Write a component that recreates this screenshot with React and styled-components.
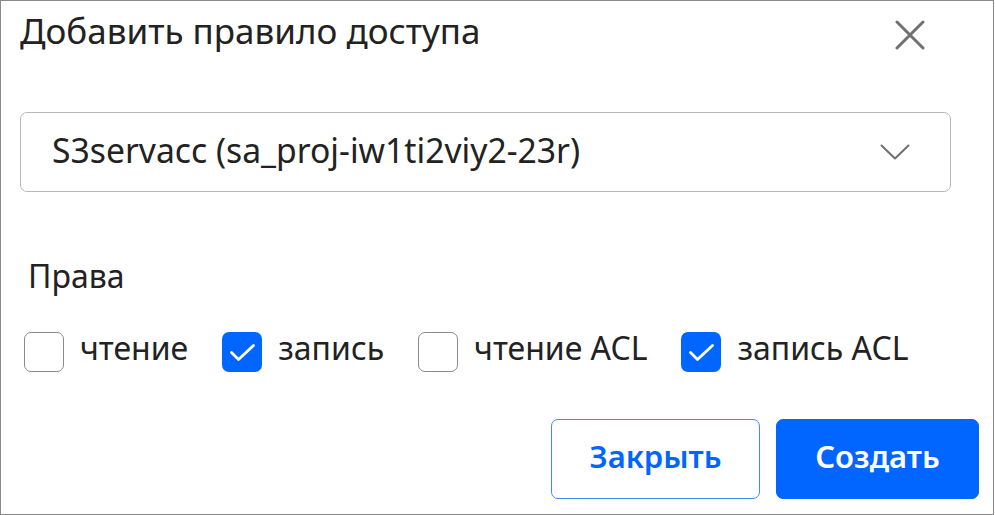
import styled, { createGlobalStyle } from "styled-components";

const GlobalStyle = createGlobalStyle`
  html, body {
    margin: 0;
    padding: 0;
    background: #ffffff;
  }
  body {
    font-family: "Noto Sans", "Open Sans", sans-serif;
    color: #222222;
  }
`;

const Dialog = styled.div`
  box-sizing: border-box;
  width: 994px;
  height: 515px;
  border: 1px solid #8a8a8a;
  background: #ffffff;
  padding: 0 14px 0 19px;
  display: flex;
  flex-direction: column;
`;

const Header = styled.div`
  display: flex;
  align-items: flex-start;
  justify-content: space-between;
  padding-top: 10px;
`;

const Title = styled.h2`
  margin: 0;
  font-size: 35px;
  font-weight: 400;
  line-height: 40px;
  color: #222222;
`;

const CloseButton = styled.button`
  border: 0;
  background: transparent;
  padding: 0;
  width: 40px;
  height: 40px;
  margin: 4px 49px 0 0;
  display: flex;
  align-items: center;
  justify-content: center;
  cursor: pointer;
`;

const Select = styled.div`
  box-sizing: border-box;
  margin-top: 57px;
  width: 931px;
  height: 80px;
  border: 1px solid #b8b8b8;
  border-radius: 7px;
  display: flex;
  align-items: center;
  justify-content: space-between;
  padding: 0 40px 0 31px;
  font-size: 33.7px;
  color: #222222;
`;

const SelectValue = styled.span`
  line-height: 40px;
  padding-bottom: 5px;
`;

const SectionLabel = styled.div`
  margin: 64px 0 0 8px;
  font-size: 32px;
  line-height: 40px;
  color: #222222;
`;

const OptionRow = styled.div`
  display: flex;
  align-items: center;
  margin: 36px 0 0 4px;
  gap: 34px;
`;

const Option = styled.label`
  display: flex;
  align-items: center;
  gap: 16px;
`;

const OptionText = styled.span`
  font-size: 32px;
  line-height: 32px;
  padding-bottom: 8px;
  color: #222222;
`;

const Box = styled.span`
  box-sizing: border-box;
  width: 40px;
  height: 40px;
  border-radius: 7px;
  display: flex;
  align-items: center;
  justify-content: center;
  border: ${(p) => (p.$checked ? "none" : "1px solid #8a8a8a")};
  background: ${(p) => (p.$checked ? "#0066ff" : "#ffffff")};
`;

const Footer = styled.div`
  display: flex;
  justify-content: flex-end;
  gap: 16px;
  margin-top: 47px;
`;

const Button = styled.button`
  box-sizing: border-box;
  height: 80px;
  width: ${(p) => p.$width}px;
  padding: 0 0 6px;
  border-radius: 7px;
  font-family: "Noto Sans", "Open Sans", sans-serif;
  font-size: 31px;
  font-weight: 600;
  cursor: pointer;
  border: 1px solid ${(p) => (p.$primary ? "#0066ff" : "#3d8bff")};
  background: ${(p) => (p.$primary ? "#0066ff" : "#ffffff")};
  color: ${(p) => (p.$primary ? "#ffffff" : "#0066ff")};
`;

const options = [
  { label: "чтение", checked: false },
  { label: "запись", checked: true },
  { label: "чтение ACL", checked: false },
  { label: "запись ACL", checked: true },
];

function Check() {
  return (
    <svg width="40" height="40" viewBox="0 0 40 40" fill="none">
      <path
        d="M9.5 20.5L16.5 27.5L31.5 13.5"
        stroke="#ffffff"
        strokeWidth="2.8"
        strokeLinecap="round"
        strokeLinejoin="round"
      />
    </svg>
  );
}

export default function App() {
  return (
    <>
      <GlobalStyle />
      <Dialog>
        <Header>
          <Title>Добавить правило доступа</Title>
          <CloseButton aria-label="close">
            <svg width="30" height="30" viewBox="0 0 30 30">
              <path
                d="M2 2L28 28M28 2L2 28"
                stroke="#707070"
                strokeWidth="3"
                strokeLinecap="round"
              />
            </svg>
          </CloseButton>
        </Header>

        <Select>
          <SelectValue>S3servacc (sa_proj-iw1ti2viy2-23r)</SelectValue>
          <svg width="30" height="16" viewBox="0 0 30 16" fill="none">
            <path
              d="M1.5 1.5L15 14.5L28.5 1.5"
              stroke="#707070"
              strokeWidth="2"
              strokeLinecap="round"
              strokeLinejoin="round"
            />
          </svg>
        </Select>

        <SectionLabel>Права</SectionLabel>
        <OptionRow>
          {options.map((o) => (
            <Option key={o.label}>
              <Box $checked={o.checked}>{o.checked && <Check />}</Box>
              <OptionText>{o.label}</OptionText>
            </Option>
          ))}
        </OptionRow>

        <Footer>
          <Button $width={209}>Закрыть</Button>
          <Button $width={203} $primary>
            Создать
          </Button>
        </Footer>
      </Dialog>
    </>
  );
}
